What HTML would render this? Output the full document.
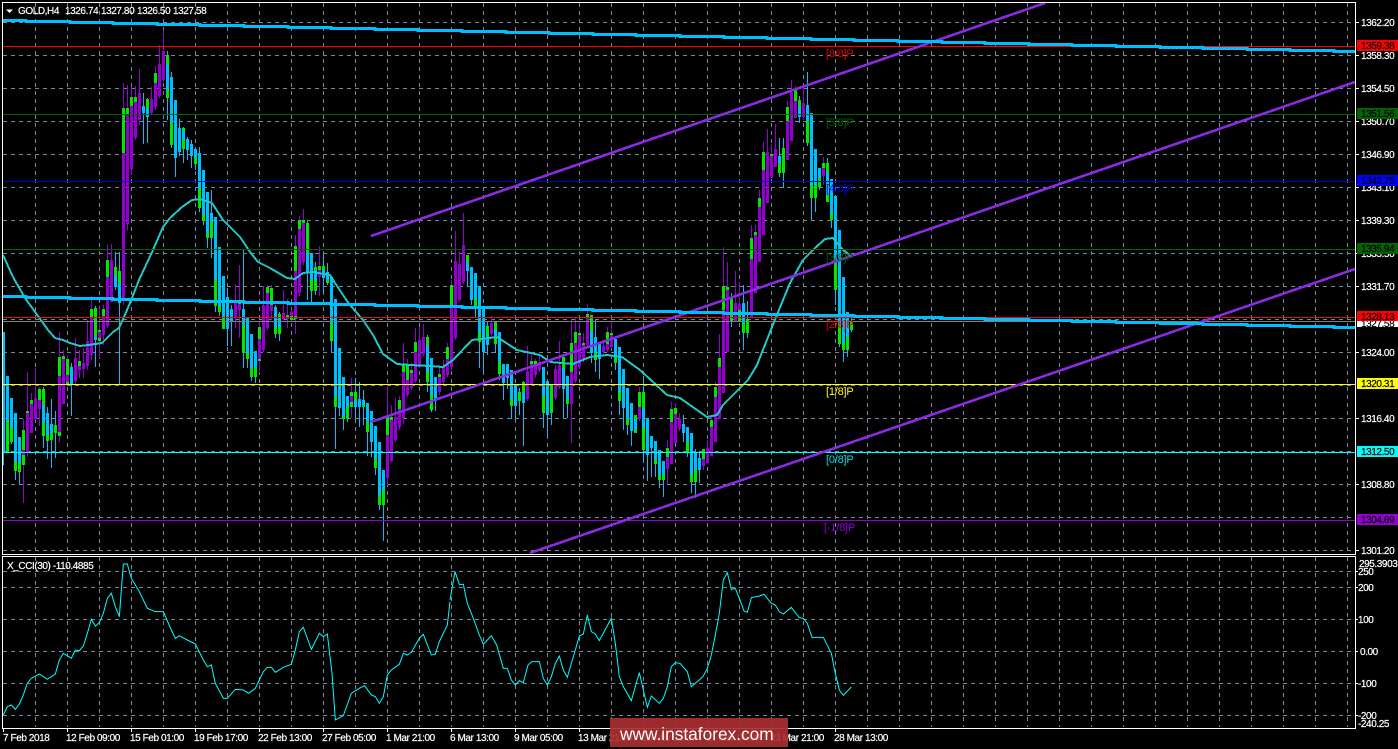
<!DOCTYPE html>
<html><head><meta charset="utf-8"><title>GOLD,H4</title>
<style>
html,body{margin:0;padding:0;background:#000;width:1398px;height:749px;overflow:hidden}
svg{display:block;position:absolute;left:0;top:0}
text{font-family:"Liberation Sans",sans-serif;font-size:10px;letter-spacing:-.42px;fill:#fff;stroke:#fff;stroke-width:.2px}
.k text{fill:#000;stroke:#000}
.l text{font-size:11px;letter-spacing:-.2px;stroke:none}
</style></head><body>
<svg width="1398" height="749" viewBox="0 0 1398 749" xmlns="http://www.w3.org/2000/svg">
<rect width="1398" height="749" fill="#000"/>
<g fill="none" stroke="#778899" stroke-width="1" stroke-dasharray="4 4" shape-rendering="crispEdges">
<path d="M3 22.5H1355M3 55.5H1355M3 88.5H1355M3 121.5H1355M3 154.5H1355M3 187.5H1355M3 220.5H1355M3 253.5H1355M3 286.5H1355M3 319.5H1355M3 352.5H1355M3 385.5H1355M3 418.5H1355M3 451.5H1355M3 484.5H1355M3 517.5H1355M3 550.5H1355"/>
<path d="M3 571.5H1355M3 587.5H1355M3 619.5H1355M3 651.5H1355M3 683.5H1355M3 715.5H1355"/>
<path d="M35.5 3V553M67.5 3V553M99.5 3V553M131.5 3V553M163.5 3V553M195.5 3V553M227.5 3V553M259.5 3V553M291.5 3V553M323.5 3V553M355.5 3V553M387.5 3V553M419.5 3V553M451.5 3V553M483.5 3V553M515.5 3V553M547.5 3V553M579.5 3V553M611.5 3V553M643.5 3V553M675.5 3V553M707.5 3V553M739.5 3V553M771.5 3V553M803.5 3V553M835.5 3V553M867.5 3V553M899.5 3V553M931.5 3V553M963.5 3V553M995.5 3V553M1027.5 3V553M1059.5 3V553M1091.5 3V553M1123.5 3V553M1155.5 3V553M1187.5 3V553M1219.5 3V553M1251.5 3V553M1283.5 3V553M1315.5 3V553M1347.5 3V553"/>
<path d="M35.5 557V727M67.5 557V727M99.5 557V727M131.5 557V727M163.5 557V727M195.5 557V727M227.5 557V727M259.5 557V727M291.5 557V727M323.5 557V727M355.5 557V727M387.5 557V727M419.5 557V727M451.5 557V727M483.5 557V727M515.5 557V727M547.5 557V727M579.5 557V727M611.5 557V727M643.5 557V727M675.5 557V727M707.5 557V727M739.5 557V727M771.5 557V727M803.5 557V727M835.5 557V727M867.5 557V727M899.5 557V727M931.5 557V727M963.5 557V727M995.5 557V727M1027.5 557V727M1059.5 557V727M1091.5 557V727M1123.5 557V727M1155.5 557V727M1187.5 557V727M1219.5 557V727M1251.5 557V727M1283.5 557V727M1315.5 557V727M1347.5 557V727"/>
</g>
<g fill="none" shape-rendering="crispEdges">
<!-- purple wicks -->
<path stroke="#9400d3" stroke-width="1" d="M23.5 419V503M27.5 372V457M31.5 393V433M35.5 368V420M39.5 387V426M59.5 332V442M63.5 350V404M67.5 355V385M75.5 338V385M79.5 350V378M83.5 348V378M87.5 320V370M91.5 296V360M99.5 305V358M103.5 305V345M107.5 245V328M111.5 244V302M123.5 83V305M127.5 85V230M131.5 87V175M135.5 86V140M139.5 69V125M151.5 87V115M155.5 66V110M159.5 45V98M163.5 30V82M235.5 284V328M239.5 265V338M259.5 322V373M263.5 286V352M267.5 285V330M271.5 285V320M283.5 290V320M287.5 299V328M291.5 310V322M295.5 235V334M299.5 216V296M303.5 209V265M319.5 246V296M351.5 378V418M387.5 385V485M391.5 405V462M395.5 398V442M399.5 396V430M403.5 343V424M407.5 359V397M411.5 363V390M415.5 328V383M419.5 327V368M423.5 324V356M439.5 367V395M443.5 360V384M447.5 343V377M451.5 280V370M455.5 231V340M459.5 251V302M463.5 213V284M491.5 316V336M527.5 346V401M531.5 355V386M535.5 359V378M539.5 355V372M555.5 365V400M559.5 341V389M571.5 320V443M575.5 318V383M579.5 322V369M583.5 333V362M587.5 304V346M603.5 340V354M607.5 327V352M611.5 321V349M639.5 387V421M667.5 440V484M671.5 402V464M675.5 403V443M679.5 413V431M703.5 449V470M707.5 440V463M711.5 415V456M715.5 382V442M719.5 334V419M723.5 247V393M727.5 262V352M735.5 271V322M739.5 282V322M751.5 225V317M755.5 225V293M759.5 190V262M763.5 142V235M767.5 129V203M771.5 144V178M775.5 124V167M787.5 101V160M791.5 80V141M795.5 86V118M803.5 87V120M823.5 157V185"/>
<!-- blue wicks -->
<path stroke="#00bfff" stroke-width="1" d="M3.5 332V465M7.5 376V452M11.5 398V444M15.5 413V480M19.5 437V485M43.5 387V448M47.5 407V459M51.5 399V468M55.5 411V458M71.5 363V416M95.5 306V367M115.5 252V290M119.5 252V384M143.5 93V144M147.5 98V143M167.5 51V120M171.5 72V148M175.5 100V177M179.5 119V156M183.5 127V163M187.5 137V160M191.5 140V168M195.5 147V170M199.5 147V212M203.5 170V225M207.5 192V248M211.5 190V258M215.5 217V312M219.5 247V316M223.5 276V329M227.5 288V346M231.5 305V346M243.5 250V368M247.5 318V368M251.5 334V381M255.5 351V383M275.5 305V338M279.5 312V341M307.5 221V300M311.5 253V302M315.5 262V295M323.5 255V293M327.5 263V285M331.5 277V352M335.5 299V449M339.5 348V416M343.5 377V430M347.5 396V422M355.5 378V418M359.5 382V427M363.5 390V425M367.5 403V456M371.5 411V457M375.5 426V475M379.5 442V510M383.5 470V541M427.5 335V392M431.5 358V412M435.5 377V411M467.5 255V287M471.5 267V305M475.5 273V317M479.5 286V368M483.5 307V373M487.5 322V355M495.5 322V353M499.5 332V380M503.5 364V400M507.5 364V389M511.5 370V419M515.5 385V419M519.5 388V415M523.5 381V446M543.5 367V428M547.5 381V437M551.5 385V425M563.5 357V418M567.5 376V418M591.5 315V363M595.5 320V372M599.5 343V379M615.5 339V370M619.5 347V415M623.5 369V430M627.5 388V435M631.5 403V446M635.5 415V433M643.5 376V463M647.5 418V481M651.5 436V477M655.5 441V477M659.5 450V488M663.5 461V497M683.5 415V442M687.5 427V457M691.5 433V493M695.5 449V498M699.5 452V483M731.5 293V327M743.5 285V350M747.5 301V338M779.5 138V177M783.5 138V188M799.5 96V123M807.5 72V146M811.5 113V220M815.5 149V212M819.5 168V190M827.5 158V202M831.5 179V228M835.5 196V305M839.5 230V347M843.5 277V362M847.5 312V357M851.5 318V332"/>
<!-- purple bodies -->
<path stroke="#9400d3" stroke-width="3" d="M23.5 450V455M27.5 413V452M31.5 404V433M35.5 398V419M39.5 400V409M59.5 376V432M63.5 359V404M67.5 375V382M75.5 358V381M79.5 366V370M83.5 363V369M87.5 341V366M91.5 318V355M99.5 332V338M103.5 316V335M107.5 277V326M111.5 260V302M123.5 153V300M127.5 115V224M131.5 106V169M135.5 102V138M139.5 93V120M151.5 99V113M155.5 83V107M159.5 64V96M163.5 51V80M235.5 303V318M239.5 303V310M259.5 339V359M263.5 305V350M267.5 293V328M271.5 305V311M283.5 313V319M287.5 315V319M291.5 312V316M295.5 271V316M299.5 229V293M303.5 223V262M319.5 270V277M351.5 396V402M387.5 435V478M391.5 420V461M395.5 417V440M399.5 409V427M403.5 372V418M407.5 380V395M411.5 373V388M415.5 352V381M419.5 340V367M423.5 337V354M439.5 377V392M443.5 366V382M447.5 359V375M451.5 305V367M455.5 261V338M459.5 264V300M463.5 245V282M491.5 323V334M527.5 371V399M531.5 364V385M535.5 364V375M539.5 362V370M555.5 369V398M559.5 365V387M571.5 372V404M575.5 343V381M579.5 335V367M583.5 345V360M587.5 318V345M603.5 346V352M607.5 344V350M611.5 335V347M639.5 407V419M667.5 457V469M671.5 422V464M675.5 414V443M679.5 419V429M703.5 459V466M707.5 448V463M711.5 427V456M715.5 397V442M719.5 367V419M723.5 310V393M727.5 287V352M735.5 303V322M739.5 304V310M751.5 259V317M755.5 235V293M759.5 207V262M763.5 170V235M767.5 152V203M771.5 156V178M775.5 149V167M787.5 121V160M791.5 92V141M795.5 101V118M803.5 103V117M823.5 168V176"/>
<!-- blue bodies -->
<path stroke="#00bfff" stroke-width="3" d="M3.5 332V452M7.5 376V421M11.5 398V428M15.5 413V462M19.5 437V463M43.5 405V423M47.5 413V435M51.5 424V433M71.5 367V385M95.5 337V340M115.5 275V287M119.5 283V303M143.5 106V113M147.5 109V117M167.5 65V90M171.5 77V123M175.5 100V158M179.5 128V152M183.5 131V140M187.5 139V150M191.5 144V156M195.5 149V158M199.5 153V189M203.5 170V215M207.5 192V234M211.5 213V222M215.5 217V280M219.5 247V306M223.5 276V318M227.5 297V329M231.5 309V322M243.5 309V325M247.5 318V353M251.5 334V368M255.5 351V367M275.5 307V327M279.5 317V327M307.5 253V272M311.5 253V280M315.5 270V280M323.5 270V278M327.5 272V280M331.5 277V323M335.5 299V397M339.5 348V408M343.5 377V416M347.5 396V407M355.5 400V407M359.5 399V407M363.5 400V405M367.5 403V422M371.5 411V442M375.5 426V459M379.5 442V495M383.5 470V490M427.5 345V372M431.5 358V395M435.5 377V401M467.5 262V271M471.5 267V300M475.5 273V299M479.5 286V333M483.5 307V352M487.5 335V345M495.5 330V337M499.5 332V362M503.5 364V383M507.5 364V378M511.5 370V399M515.5 385V406M523.5 392V403M543.5 367V396M547.5 381V415M563.5 368V389M567.5 376V399M591.5 331V353M595.5 337V353M599.5 343V359M615.5 339V358M619.5 347V392M623.5 369V408M627.5 388V419M631.5 403V431M635.5 419V430M643.5 408V428M647.5 418V455M651.5 436V448M655.5 441V460M659.5 450V475M663.5 461V475M683.5 424V433M687.5 427V442M691.5 433V475M695.5 452V470M699.5 458V470M743.5 303V323M779.5 156V163M799.5 107V117M807.5 105V121M811.5 113V185M815.5 149V185M819.5 168V178M827.5 173V195M831.5 179V214M835.5 196V263M839.5 230V325M843.5 277V343M847.5 312V337"/>
<!-- green bodies -->
<path stroke="#00e800" stroke-width="3" d="M7.5 421V452M11.5 428V442M15.5 462V471M19.5 463V472M23.5 430V450M23.5 455V465M27.5 411V413M31.5 400V404M39.5 389V400M43.5 389V405M43.5 423V436M47.5 435V441M51.5 433V440M55.5 425V433M59.5 357V376M59.5 432V436M63.5 356V359M67.5 359V375M67.5 382V385M79.5 361V366M91.5 309V318M95.5 308V337M99.5 330V332M99.5 338V341M103.5 309V316M107.5 260V277M115.5 267V275M119.5 271V283M123.5 108V153M127.5 108V115M131.5 97V106M135.5 97V102M147.5 99V109M155.5 73V83M167.5 55V65M167.5 90V98M171.5 123V145M183.5 128V131M183.5 140V149M195.5 158V164M199.5 189V208M203.5 215V221M207.5 234V238M211.5 222V238M215.5 280V306M219.5 306V312M223.5 318V329M239.5 303V304M243.5 325V353M247.5 353V359M251.5 368V377M255.5 367V377M259.5 327V339M259.5 359V361M267.5 287V293M271.5 288V305M275.5 327V334M279.5 314V317M279.5 327V334M287.5 315V318M291.5 316V320M295.5 246V271M295.5 316V319M299.5 220V229M303.5 220V223M307.5 223V253M311.5 280V291M315.5 267V270M315.5 280V291M319.5 266V270M323.5 266V270M327.5 280V283M331.5 323V341M335.5 397V407M343.5 416V419M347.5 407V419M351.5 392V396M351.5 402V407M355.5 392V400M363.5 405V407M367.5 422V432M375.5 459V468M379.5 495V505M383.5 490V505M387.5 417V435M391.5 417V420M399.5 400V409M403.5 365V372M407.5 365V380M411.5 370V373M415.5 342V352M427.5 337V345M427.5 372V382M431.5 395V410M439.5 374V377M447.5 347V359M451.5 285V305M467.5 255V262M475.5 299V307M479.5 333V342M487.5 326V335M495.5 322V330M495.5 337V344M499.5 362V374M511.5 399V406M519.5 392V401M523.5 382V392M531.5 361V364M535.5 361V364M543.5 396V413M551.5 385V413M563.5 357V368M567.5 399V404M571.5 343V372M575.5 332V343M579.5 333V335M583.5 343V345M587.5 314V318M591.5 315V331M595.5 353V360M607.5 332V344M611.5 333V335M615.5 358V363M619.5 392V401M627.5 419V425M635.5 415V419M635.5 430V433M639.5 392V407M643.5 392V408M643.5 428V450M655.5 460V464M659.5 475V480M663.5 475V480M667.5 448V457M671.5 409V422M675.5 408V414M687.5 442V452M691.5 475V482M695.5 470V482M703.5 449V459M711.5 420V427M715.5 387V397M719.5 358V367M723.5 286V310M727.5 287V290M731.5 297V322M739.5 310V322M743.5 323V333M747.5 319V333M751.5 238V259M755.5 232V235M759.5 198V207M763.5 152V170M771.5 154V156M779.5 163V173M783.5 148V173M787.5 107V121M795.5 90V101M799.5 100V107M807.5 121V143M811.5 185V198M815.5 185V198M819.5 178V187M823.5 163V168M827.5 163V173M827.5 195V202M831.5 214V220M835.5 263V290M839.5 325V344M843.5 343V350M847.5 337V350M851.5 322V330"/>
</g>
<!-- moving average -->
<polyline fill="none" stroke="#20c8c8" stroke-width="2" shape-rendering="crispEdges" points="3,255 13,277 25,298 38,316 48,330 55,338 63,340 70,343 80,346 88,345 102,343 113,332 119,328 124,317 130,303 139,280 153,250 163,227 170,218 182,207 192,200 200,199 212,203 223,220 240,237 250,252 258,262 270,268 287,278 295,279 303,273 313,272 330,275 335,283 347,301 350,305 363,320 373,335 383,354 397,364 410,365 430,366 443,367 453,360 472,340 497,337 517,350 540,355 550,362 573,364 590,357 607,355 622,357 640,370 653,382 667,395 680,398 707,417 717,415 723,405 748,380 757,365 772,327 790,283 803,260 815,248 825,239 833,238 843,250 850,255"/>
<!-- levels -->
<g shape-rendering="crispEdges" stroke-width="1" fill="none">
<path stroke="#ff0000" d="M3 46.5H1356"/>
<path stroke="#006400" d="M3 114.5H1356M3 249.5H1356"/>
<path stroke="#0000cd" d="M3 181.5H1356"/>
<path stroke="#e01010" d="M3 317.5H1356"/>
<path stroke="#808080" d="M3 321.5H1356"/>
<path stroke="#ffff00" d="M3 384.5H1356"/>
<path stroke="#00ffff" d="M3 452.5H1356"/>
<path stroke="#9400d3" d="M3 520.5H1356"/>
</g>
<!-- channel lines -->
<g fill="none" stroke="#8a2be2" stroke-width="2.6" shape-rendering="crispEdges">
<path d="M371 236L1045 3"/>
<path d="M371 422L1355 82"/>
<path d="M530 553L1355 269"/>
</g>
<!-- thick blue stepped lines -->
<g fill="none" stroke="#00bfff" stroke-width="3" shape-rendering="crispEdges">
<path d="M3 20.5H26V21.5H70V22.5H113V23.5H157V24.5H200V25.5H244V26.5H288V27.5H331V28.5H375V29.5H418V30.5H462V31.5H506V32.5H549V33.5H593V34.5H636V35.5H680V36.5H724V37.5H767V38.5H811V39.5H854V40.5H898V41.5H942V42.5H985V43.5H1029V44.5H1072V45.5H1116V46.5H1160V47.5H1203V48.5H1247V49.5H1290V50.5H1334V51.5H1355"/>
<path d="M3 296.5H26V297.5H70V298.5H113V299.5H157V300.5H200V301.5H244V302.5H288V303.5H331V304.5H375V305.5H418V306.5H462V307.5H506V308.5H549V309.5H593V310.5H636V311.5H680V312.5H724V313.5H767V314.5H811V315.5H854V316.5H898V317.5H942V318.5H985V319.5H1029V320.5H1072V321.5H1116V322.5H1160V323.5H1203V324.5H1247V325.5H1290V326.5H1334V327.5H1355"/>
</g>
<!-- level labels -->
<g class="l">
<text x="826" y="57" style="fill:#e00000">[8/8]P</text>
<text x="826" y="126" style="fill:#006400">[5/8]P</text>
<text x="826" y="192" style="fill:#0000e0">[4/8]P</text>
<text x="826" y="261" style="fill:#006400">[3/8]P</text>
<text x="826" y="328" style="fill:#e00000">[2/8]P</text>
<text x="826" y="395" style="fill:#ffff00">[1/8]P</text>
<text x="826" y="463" style="fill:#00e0e0">[0/8]P</text>
<text x="824" y="531" style="fill:#9400d3">[-1/8]P</text>
</g>
<!-- frames -->
<g fill="none" stroke="#fff" stroke-width="1" shape-rendering="crispEdges">
<path d="M2.5 2.5H1355.5V554.5H2.5Z"/>
<path d="M2.5 556.5H1355.5V728.5H2.5Z"/>
<path d="M1356 22.5h3M1356 55.5h3M1356 88.5h3M1356 121.5h3M1356 154.5h3M1356 187.5h3M1356 220.5h3M1356 253.5h3M1356 286.5h3M1356 352.5h3M1356 418.5h3M1356 484.5h3M1356 550.5h3M1356 571.5h2M1356 587.5h2M1356 619.5h2M1356 651.5h2M1356 683.5h2M1356 715.5h2"/>
<path d="M3.5 729v3M67.5 729v3M131.5 729v3M195.5 729v3M259.5 729v3M323.5 729v3M387.5 729v3M451.5 729v3M515.5 729v3M579.5 729v3M643.5 729v3M707.5 729v3M771.5 729v3M835.5 729v3"/>
</g>
<path d="M6 9.5h7l-3.5 3.5z" fill="#fff"/>
<text x="18" y="14">GOLD,H4</text>
<text x="65" y="14">1326.74</text>
<text x="101" y="14">1327.80</text>
<text x="137" y="14">1326.50</text>
<text x="173" y="14">1327.58</text>
<!-- price scale -->
<g>
<text x="1361" y="26">1362.20</text>
<text x="1361" y="59">1358.30</text>
<text x="1361" y="92">1354.50</text>
<text x="1361" y="125">1350.70</text>
<text x="1361" y="158">1346.90</text>
<text x="1361" y="191">1343.10</text>
<text x="1361" y="224">1339.30</text>
<text x="1361" y="257">1335.50</text>
<text x="1361" y="290">1331.70</text>
<text x="1361" y="356">1324.00</text>
<text x="1361" y="422">1316.40</text>
<text x="1361" y="488">1308.80</text>
<text x="1361" y="554">1301.20</text>
</g>
<rect x="1357" y="40" width="41" height="11" fill="#ff0000"/>
<rect x="1357" y="108" width="41" height="11" fill="#006400"/>
<rect x="1357" y="175" width="41" height="11" fill="#0000ff"/>
<rect x="1357" y="243" width="41" height="11" fill="#006400"/>
<rect x="1357" y="316" width="41" height="11" fill="#fff"/>
<rect x="1357" y="378" width="41" height="11" fill="#ffff00"/>
<rect x="1357" y="446" width="41" height="11" fill="#00ffff"/>
<rect x="1357" y="514" width="41" height="11" fill="#9400d3"/>
<g class="k">
<text x="1361" y="327">1327.58</text>
</g>
<rect x="1357" y="311" width="41" height="10" fill="#ff0000"/>
<g class="k">
<text x="1361" y="49">1359.38</text>
<text x="1361" y="117">1351.56</text>
<text x="1361" y="184">1343.75</text>
<text x="1361" y="252">1335.94</text>
<text x="1361" y="320">1328.13</text>
<text x="1361" y="387">1320.31</text>
<text x="1361" y="455">1312.50</text>
<text x="1361" y="523">1304.69</text>
</g>
<!-- CCI -->
<text x="7" y="569">X_CCI(30) -110.4885</text>
<text x="1359" y="567">295.3903</text>
<text x="1358" y="575">250</text>
<text x="1358" y="591">200</text>
<text x="1358" y="623">100</text>
<text x="1360" y="655">0.00</text>
<text x="1358" y="687">-100</text>
<text x="1358" y="719">-200</text>
<text x="1358" y="727">-240.25</text>
<g transform="translate(0,550) scale(0.33333)" fill="none" stroke="#00ffff" stroke-width="3">
<polyline points="10,495 22,470 34,465 46,478 58,462 70,435 82,400 94,385 118,372 142,388 166,372 178,330 190,310 214,325 226,300 238,302 250,288 262,250 274,208 286,228 298,218 310,190 322,145 334,130 346,170 358,200 370,42 382,42 394,85 418,125 442,175 466,185 490,185 514,240 526,265 538,257 562,270 586,282 610,330 622,350 634,345 646,400 670,445 682,445 706,418 730,420 746,430 766,415 790,365 802,352 814,352 826,367 850,352 874,343 886,300 898,245 910,232 934,298 958,250 970,260 982,252 996,370 1006,510 1030,497 1054,430 1078,415 1094,407 1114,435 1126,440 1138,460 1150,440 1162,375 1174,360 1198,343 1210,310 1222,315 1234,307 1258,265 1270,253 1294,315 1306,313 1318,275 1342,225 1350,155"/>
<g transform="translate(1350,0)">
<polyline points="0,150 15,65 28,103 40,103 52,160 70,205 88,255 100,283 124,257 140,285 160,355 172,355 184,390 196,405 208,392 220,398 234,345 246,335 268,335 280,385 292,405 304,380 316,340 328,318 340,360 352,382 364,340 376,300 388,258 400,252 412,195 424,245 436,252 448,272 484,205 496,280 508,380 520,410 544,452 568,368 592,472 604,438 628,460 640,445 652,410 664,350 676,338 690,340 712,365 724,410 748,390 760,378 772,355 784,315 796,255 808,190 820,90 832,68 844,118 856,115 870,150 882,183 892,187 904,143 928,138 942,133 964,160 976,165 988,185 1000,192 1024,172 1048,203 1060,205 1072,220 1086,262 1120,262 1144,310 1156,370 1168,420 1180,436 1204,411"/>
</g>
</g>
<!-- time axis -->
<g>
<text x="3" y="741">7 Feb 2018</text>
<text x="66" y="741">12 Feb 09:00</text>
<text x="130" y="741">15 Feb 01:00</text>
<text x="194" y="741">19 Feb 17:00</text>
<text x="258" y="741">22 Feb 13:00</text>
<text x="322" y="741">27 Feb 05:00</text>
<text x="386" y="741">1 Mar 21:00</text>
<text x="450" y="741">6 Mar 13:00</text>
<text x="514" y="741">9 Mar 05:00</text>
<text x="578" y="741">13 Mar 21:00</text>
<text x="642" y="741">16 Mar 13:00</text>
<text x="706" y="741">21 Mar 05:00</text>
<text x="770" y="741">23 Mar 21:00</text>
<text x="834" y="741">28 Mar 13:00</text>
</g>
<!-- watermark -->
<rect x="610" y="718" width="178" height="29" fill="#a82f30" opacity=".92"/>
<text x="620" y="740" style="font-size:17.3px;letter-spacing:0;fill:#fff;stroke:none">www.instaforex.com</text>
</svg>
</body></html>
